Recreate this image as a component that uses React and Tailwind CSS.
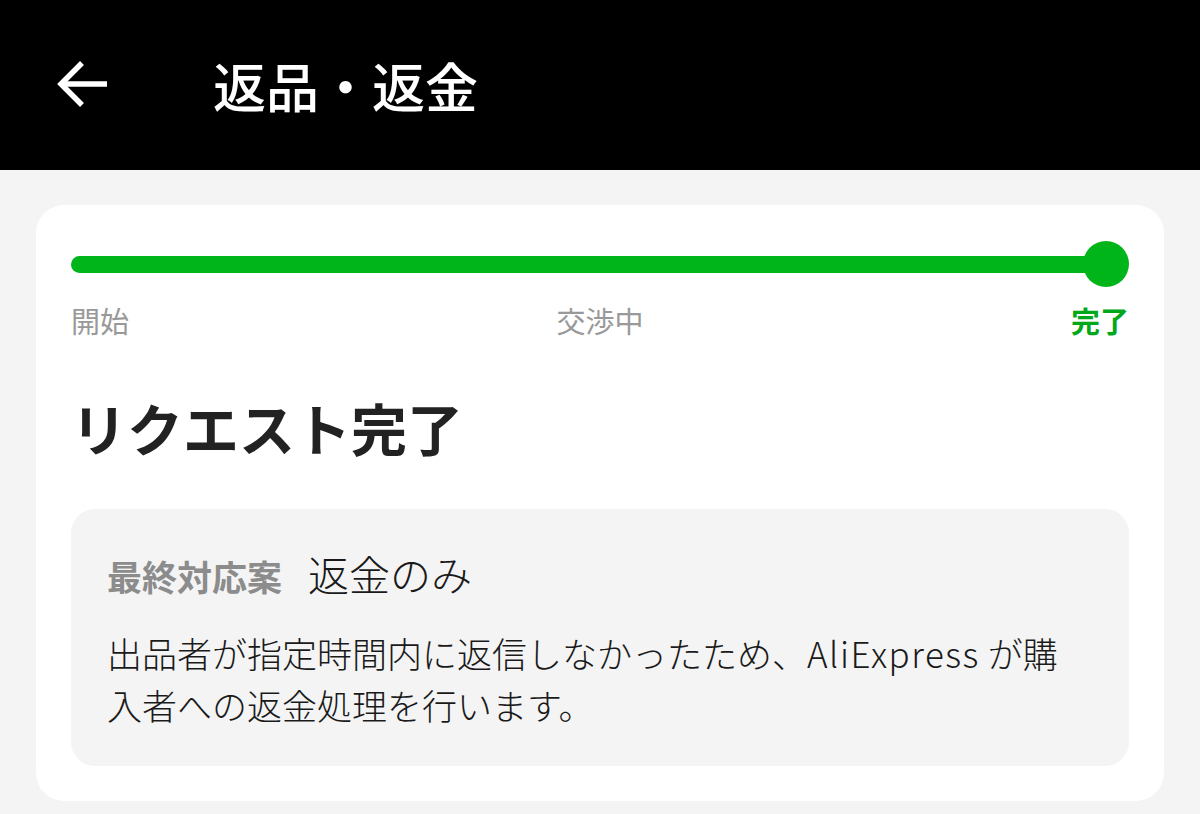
import React from "react";

export default function App() {
  const font = { fontFamily: '"Noto Sans CJK JP", "Noto Sans", sans-serif' };
  return (
    <div className="w-[1200px] h-[814px] bg-[#f4f4f4] overflow-hidden" style={font}>
      <header className="h-[170px] bg-black flex items-center pl-[57px]">
        <svg width="52" height="50" viewBox="0 0 52 50" fill="none" stroke="white" strokeWidth="5.5" strokeLinecap="butt" strokeLinejoin="miter">
          <path d="M4 24H50" />
          <path d="M25 3L4 24L25 45" />
        </svg>
        <h1 className="ml-[104px] text-white text-[53px] leading-none font-medium">返品・返金</h1>
      </header>
      <main className="px-[36px] pt-[35px]">
        <section className="bg-white rounded-[28px] px-[35px] pt-[36px] pb-[35px]">
          <div className="relative h-[46px] flex items-center">
            <div className="h-[17px] w-[calc(100%-23px)] rounded-full bg-[#00b51a]" />
            <div className="absolute right-0 top-0 w-[46px] h-[46px] rounded-full bg-[#00b51a]" />
          </div>
          <div className="mt-[12px] flex justify-between text-[29px] leading-[42px]">
            <span className="text-[#999999]">開始</span>
            <span className="text-[#999999]">交渉中</span>
            <span className="text-[#00a81a] font-bold">完了</span>
          </div>
          <h2 className="mt-[52px] text-[56px] leading-[67px] font-bold text-[#222222]">リクエスト完了</h2>
          <div className="mt-[49px] bg-[#f4f4f4] rounded-[24px] px-[36px] pt-[40px] pb-[35px]">
            <div className="flex items-baseline h-[48px]">
              <span className="text-[35px] font-bold text-[#8c8c8c] leading-[48px]">最終対応案</span>
              <span className="ml-[26px] text-[41px] text-[#1a1a1a] leading-[48px] font-light">返金のみ</span>
            </div>
            <p className="mt-[30px] text-[35px] leading-[52px] text-[#1a1a1a] font-light whitespace-nowrap">
              出品者が指定時間内に返信しなかったため、<span className="tracking-[1.5px]">AliExpress</span> が購
              <br />
              入者への返金処理を行います。
            </p>
          </div>
        </section>
      </main>
    </div>
  );
}
